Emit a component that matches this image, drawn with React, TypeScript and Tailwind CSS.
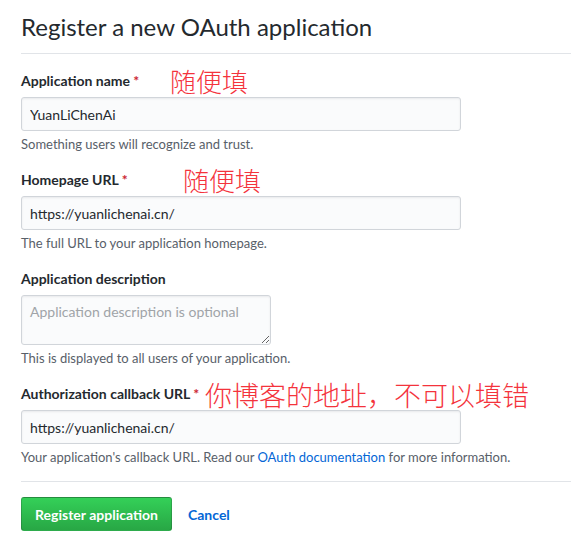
import React from "react";

const Field = ({
  label,
  note,
  required,
  children,
  mark,
}: {
  label: string;
  note: React.ReactNode;
  required?: boolean;
  children: React.ReactNode;
  mark?: React.ReactNode;
}) => (
  <div className="flex flex-col">
    <div className="relative h-[21px] flex items-center mb-[6px]">
      <label className="text-[14px] leading-[21px] font-bold text-[#24292e]">
        {label}
        {required && <span className="text-[#cb2431]"> *</span>}
      </label>
      {mark}
    </div>
    {children}
    <p className="mt-[4px] text-[13px] leading-[18px] text-[#586069] whitespace-nowrap">
      {note}
    </p>
  </div>
);

// red hand-written notes laid over the screenshot
const Mark = ({ text, left, size }: { text: string; left: string; size: string }) => (
  <span
    className={`absolute top-1/2 -translate-y-1/2 ${left} ${size} leading-none text-[#f4333c] font-light whitespace-nowrap`}
    style={{ fontFamily: '"Noto Sans CJK SC", sans-serif' }}
  >
    {text}
  </span>
);

const inputCls =
  "w-[440px] h-[34px] px-[8px] text-[14px] text-[#24292e] bg-[#fafbfc] border border-[#d1d5da] rounded-[3px] shadow-[inset_0_1px_2px_rgba(27,31,35,0.075)] outline-none";

export default function App() {
  return (
    <div
      className="w-[571px] h-[541px] bg-white pl-[21px] pt-[9px] overflow-hidden"
      style={{ fontFamily: '"Segoe UI", Lato, sans-serif' }}
    >
      <div className="border-b border-[#e1e4e8] pb-[8px] mb-[16px]">
        <h1 className="text-[24px] leading-[36px] font-normal text-[#24292e]">
          Register a new OAuth application
        </h1>
      </div>

      <div className="flex flex-col gap-[16px]">
        <Field
          label="Application name"
          required
          note="Something users will recognize and trust."
          mark={<Mark text="随便填" left="left-[149px]" size="text-[26px]" />}
        >
          <input readOnly value="YuanLiChenAi" className={inputCls} />
        </Field>

        <Field
          label="Homepage URL"
          required
          note="The full URL to your application homepage."
          mark={<Mark text="随便填" left="left-[162px]" size="text-[26px]" />}
        >
          <input readOnly value="https://yuanlichenai.cn/" className={inputCls} />
        </Field>

        <Field
          label="Application description"
          note="This is displayed to all users of your application."
        >
          <textarea
            readOnly
            placeholder="Application description is optional"
            className="w-[250px] h-[50px] px-[8px] py-[5px] text-[14px] leading-[21px] text-[#24292e] placeholder:text-[#a0a4a8] bg-[#fafbfc] border border-[#d1d5da] rounded-[3px] shadow-[inset_0_1px_2px_rgba(27,31,35,0.075)] outline-none resize"
          />
        </Field>

        <Field
          label="Authorization callback URL"
          required
          note={
            <>
              Your application's callback URL. Read our{" "}
              <a className="text-[#0366d6]">OAuth documentation</a> for more
              information.
            </>
          }
          mark={
            <Mark
              text="你博客的地址，不可以填错"
              left="left-[184px]"
              size="text-[27px]"
            />
          }
        >
          <input readOnly value="https://yuanlichenai.cn/" className={inputCls} />
        </Field>
      </div>

      <div className="border-t border-[#e1e4e8] mt-[15px] pt-[15px] flex items-center">
        <button className="w-[151px] h-[34px] text-[14px] font-bold text-white rounded-[3px] border border-[rgba(27,31,35,0.2)] bg-gradient-to-b from-[#34d058] to-[#28a745]">
          Register application
        </button>
        <a className="ml-[16px] text-[14px] font-bold text-[#0366d6]">Cancel</a>
      </div>
    </div>
  );
}
